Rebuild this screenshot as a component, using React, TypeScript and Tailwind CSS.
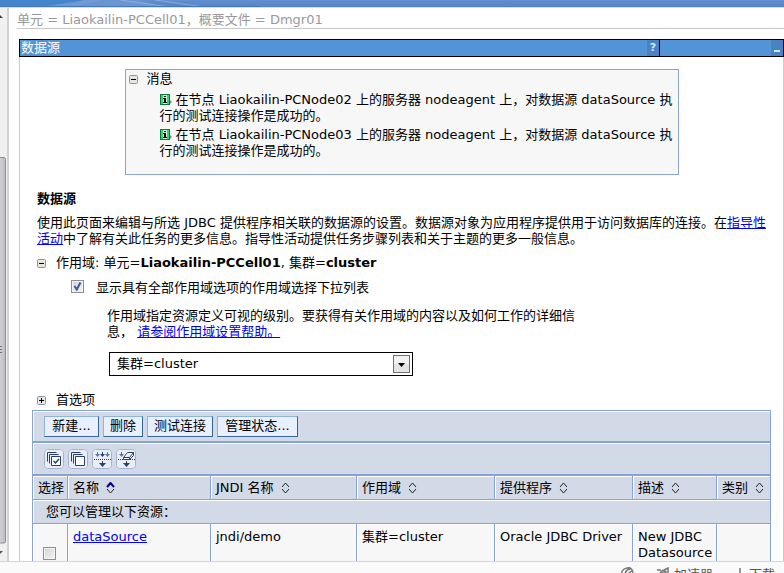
import { useState, type ReactNode } from "react";

const MESSAGES = ["Liaokailin-PCNode02", "Liaokailin-PCNode03"];

const ACTIONS = ["新建...", "删除", "测试连接", "管理状态..."];

const COLUMNS = ["名称", "JNDI 名称", "作用域", "提供程序", "描述", "类别"];

export default function App() {
  return (
    <div className="flex h-screen flex-col overflow-hidden bg-white font-['DejaVu_Sans','Noto_Sans_CJK_SC',sans-serif] text-[13px] leading-4 text-black">
      <TopBanner />
      <div className="flex min-h-0 flex-1">
        <SideScrollbar />
        <main className="min-w-0 flex-1 overflow-hidden">
          <div className="ml-2 border-b border-[#c8c8c8] pt-1 text-[#999]">
            单元 = Liaokailin-PCCell01，概要文件 = Dmgr01
          </div>
          <Portlet />
        </main>
      </div>
      <StatusBar />
    </div>
  );
}

function TopBanner() {
  return (
    <header className="h-2 shrink-0 overflow-hidden border-b border-[#d5dcea] bg-linear-to-b from-[#628fd0] to-[#5583c6]">
      <svg width="260" height="7" viewBox="0 0 260 7">
        <path d="M0 0h85L60 7H0z" fill="#4584ca" />
        <path d="M40 7L85 0h20L75 7z" fill="#7ea3da" opacity=".6" />
        <path d="M75 7l30-7h35l20 7z" fill="#6a94d2" />
        <path d="M120 0l50 7M155 0l50 7" fill="none" stroke="#a3bfe6" opacity=".6" />
        <path d="M0 6.500h260" stroke="#4378bd" />
      </svg>
    </header>
  );
}

function SideScrollbar() {
  return (
    <div className="flex w-[9px] shrink-0 border-r-2 border-[#d2d2d2] bg-[#f0f0f0]">
      <svg width="7" height="553" viewBox="0 0 7 553" className="shrink-0">
        <defs>
          <linearGradient id="thumb">
            <stop offset="0" stopColor="#dcdcde" />
            <stop offset="1" stopColor="#bcbcc0" />
          </linearGradient>
        </defs>
        <path d="M0 10h3l-3-3z" fill="#444" />
        <path d="M-3 149.500h7q1.500 0 1.500 2v382q0 1.500-1.500 1.500h-7z" fill="url(#thumb)" stroke="#8e8e92" />
        <path d="M0 338.500h2M0 341.500h2M0 344.500h2" stroke="#777" />
        <path d="M0 543h3l-3 3z" fill="#555" />
      </svg>
    </div>
  );
}

function Portlet() {
  return (
    <section className="ml-[10px] mt-[10px]">
      <div className="flex border border-black bg-[#5394d6] text-white">
        <h1 className="flex-1 pl-px">数据源</h1>
        <button aria-label="帮助" className="flex w-3 items-center justify-center bg-[#4a83c4] text-[11px] font-bold leading-4 text-[#d5e6f8]">
          ?
        </button>
        <div className="flex w-[124px] justify-end border-l border-black">
          <button aria-label="最小化" className="flex w-3 items-end justify-center bg-[#4a83c4] pb-1">
            <span className="h-[2px] w-[6px] bg-[#d5e6f8]" />
          </button>
        </div>
      </div>
      <div className="border-x border-[#ccc] pt-3">
        <MessageBox />
        <div className="pl-[17px] pr-3">
          <h2 className="mt-4 font-bold">数据源</h2>
          <p className="mt-2 whitespace-nowrap">
            使用此页面来编辑与所选 JDBC 提供程序相关联的数据源的设置。数据源对象为应用程序提供用于访问数据库的连接。在
            <TextLink>
              指导性
              <br />
              活动
            </TextLink>
            中了解有关此任务的更多信息。指导性活动提供任务步骤列表和关于主题的更多一般信息。
          </p>
          <div className="mt-2 flex items-center gap-[10px]">
            <Toggle open label="作用域" />
            <span>
              作用域: 单元=<b>Liaokailin-PCCell01</b>, 集群=<b>cluster</b>
            </span>
          </div>
        </div>
        <ScopeForm />
        <div className="mt-4 flex items-center gap-[10px] pl-[17px]">
          <Toggle label="首选项" />
          <span>首选项</span>
        </div>
        <DataSources />
      </div>
    </section>
  );
}

function MessageBox() {
  return (
    <div className="mx-auto min-h-[106px] max-w-[554px] border border-[#8aa5d6] bg-[#f7f7f7] pt-px">
      <div className="flex items-center gap-[9px] pl-[3px]">
        <Toggle open label="消息" />
        <span>消息</span>
      </div>
      <ul className="flex flex-col gap-[3px] whitespace-nowrap pl-[34px] pt-[5px]">
        {MESSAGES.map((node) => (
          <li key={node}>
            <InfoIcon />
            在节点 {node} 上的服务器 nodeagent 上，对数据源 dataSource 执
            <br />
            行的测试连接操作是成功的。
          </li>
        ))}
      </ul>
    </div>
  );
}

function InfoIcon() {
  return (
    <svg width="12" height="12" viewBox="0 0 12 12" className="mr-1 inline-block align-[-2px]">
      <path d="M10 6l2 2-2 2z" fill="#888" />
      <path d="M0 0h10v11H0z" fill="#087a3c" />
      <path d="M1 1h8v9H1z" fill="#2fd672" />
      <path d="M3 1h4v9H3z" fill="#d8f5e2" />
      <path d="M4 2h2v1H4zM3 4h3v4h1v1H3V8h1V5H3z" fill="#000" />
    </svg>
  );
}

function Toggle({ open, label }: { open?: boolean; label: string }) {
  return (
    <button aria-label={label} aria-expanded={!!open} className="size-[9px] shrink-0">
      <svg width="9" height="9" viewBox="0 0 9 9">
        <rect x=".5" y=".5" width="8" height="8" rx="1" fill="#e9e5df" stroke="#8297b3" />
        <path d={open ? "M2 4.500h5" : "M2 4.500h5M4.500 2v5"} stroke="#000" />
      </svg>
    </button>
  );
}

function TextLink({ children }: { children: ReactNode }) {
  return (
    <a href="#" className="text-[#0000ff] underline">
      {children}
    </a>
  );
}

function Check({ id, checked, onChange }: { id: string; checked: boolean; onChange: (v: boolean) => void }) {
  return (
    <span className="grid size-[13px] shrink-0">
      <input
        id={id}
        type="checkbox"
        aria-label={id}
        checked={checked}
        onChange={(e) => onChange(e.target.checked)}
        className="col-start-1 row-start-1 size-[13px] appearance-none border border-[#8e8f8f] bg-linear-to-br from-[#d0d3d8] to-[#f6f6f6] shadow-[inset_0_0_0_1px_#f4f4f4]"
      />
      {checked && (
        <svg width="13" height="13" viewBox="0 0 13 13" className="pointer-events-none col-start-1 row-start-1">
          <path d="M3.500 6l2.300 3.500L9.500 2.500" fill="none" stroke="#42589c" strokeWidth="2" />
        </svg>
      )}
    </span>
  );
}

function ScopeForm() {
  const [showAll, setShowAll] = useState(true);

  return (
    <div className="pl-[51px]">
      <div className="mt-[9px] flex items-start gap-3">
        <Check id="showAllScopes" checked={showAll} onChange={setShowAll} />
        <label htmlFor="showAllScopes">显示具有全部作用域选项的作用域选择下拉列表</label>
      </div>
      <p className="mt-3 whitespace-nowrap pl-9">
        作用域指定资源定义可视的级别。要获得有关作用域的内容以及如何工作的详细信
        <br />
        息， <TextLink>请参阅作用域设置帮助。</TextLink>
      </p>
      <div className="ml-[38px] mt-3 grid w-[304px] items-center">
        <select
          aria-label="作用域"
          className="col-start-1 row-start-1 h-6 appearance-none border border-black bg-white pl-[7px]"
        >
          <option>集群=cluster</option>
        </select>
        <svg width="17" height="18" viewBox="0 0 17 18" className="pointer-events-none col-start-1 row-start-1 mr-[3px] justify-self-end">
          <rect x=".5" y=".5" width="16" height="17" fill="#e4e4e4" stroke="#707070" />
          <path d="M1 1h15v8H1z" fill="#f2f2f2" />
          <path d="M5 8h7l-3.500 4z" fill="#000" />
        </svg>
      </div>
    </div>
  );
}

function DataSources() {
  const [selected, setSelected] = useState(false);

  return (
    <div className="mx-3 mt-[2px] border border-[#86a2d8] bg-[#d2d9e7]">
      <div className="grid h-8 grid-cols-[55px_40px_66px_81px] items-center gap-1 border-b-2 border-[#86a2d8] pl-[11px] shadow-[inset_1px_1px_0_#fff]">
        {ACTIONS.map((action) => (
          <button
            key={action}
            className="h-[21px] whitespace-nowrap border border-b-[#336699] border-l-[#8fb3d9] border-r-[#336699] border-t-[#8fb3d9] bg-[#e8f0ff]"
          >
            {action}
          </button>
        ))}
      </div>
      <div className="flex h-[33px] items-center gap-1 border-b-2 border-[#86a2d8] pl-[11px] shadow-[inset_1px_1px_0_#fff]">
        <IconButton label="全选">
          <path d="M3.500 12.500v-9h9M5.500 14.500v-9h9" />
          <path d="M7.500 7.500h9v9h-9z" fill="#fff" />
          <path d="M9.500 12l2 2 3.500-4" strokeWidth="1.500" />
        </IconButton>
        <IconButton label="取消全选">
          <path d="M3.500 12.500v-9h9M5.500 14.500v-9h9" />
          <path d="M7.500 7.500h9v9h-9z" fill="#fff" />
        </IconButton>
        <IconButton label="显示过滤器">
          <Filter />
          <path d="M15.500 3v3" stroke="#56779f" />
          <path d="M13 5h5l-2.500 3z" fill="#56779f" stroke="none" />
          <path d="M10.500 3v3" />
          <path d="M8 5h5l-2.500 3z" fill="#2b3f6b" stroke="none" />
        </IconButton>
        <IconButton label="清除过滤器">
          <Filter />
          <path d="M7.500 8.500l4-5h6v3l-4 4h-6zM7.500 8.500h6l4-5M13.500 8.500v2" fill="#fff" />
        </IconButton>
      </div>
      <table className="w-full table-fixed border-separate border-spacing-0 text-left">
        <colgroup>
          <col className="w-[34px]" />
          <col className="w-[143px]" />
          <col className="w-[146px]" />
          <col className="w-[138px]" />
          <col />
          <col className="w-[84px]" />
          <col className="w-[54px]" />
        </colgroup>
        <thead>
          <tr className="h-6 whitespace-nowrap">
            <th className="border-b border-[#86a2d8] pl-[5px] pt-px font-normal shadow-[inset_1px_1px_0_#fff]">选择</th>
            {COLUMNS.map((name, i) => (
              <th
                key={name}
                className="border-b border-l border-[#86a2d8] pl-[5px] pt-px font-normal shadow-[inset_1px_1px_0_#fff]"
              >
                <span className="flex items-center gap-[7px]">
                  {name}
                  <SortIcon active={i === 0} />
                </span>
              </th>
            ))}
          </tr>
        </thead>
        <tbody>
          <tr className="h-6">
            <td colSpan={7} className="border-b border-[#86a2d8] pl-[13px] pt-px shadow-[inset_1px_1px_0_#fff]">
              您可以管理以下资源：
            </td>
          </tr>
          <tr className="h-10 bg-[#f7f7f7] align-top">
            <td className="pl-[10px] pt-[23px] shadow-[inset_1px_1px_0_#fff]">
              <Check id="selectDataSource" checked={selected} onChange={setSelected} />
            </td>
            <Cell>
              <TextLink>dataSource</TextLink>
            </Cell>
            <Cell>jndi/demo</Cell>
            <Cell>集群=cluster</Cell>
            <Cell>Oracle JDBC Driver</Cell>
            <Cell>
              New JDBC
              <br />
              Datasource
            </Cell>
            <Cell />
          </tr>
        </tbody>
      </table>
    </div>
  );
}

function Cell({ children }: { children?: ReactNode }) {
  return (
    <td className="whitespace-nowrap border-l border-[#86a2d8] pl-[5px] pt-[5px] shadow-[inset_1px_1px_0_#fff]">
      {children}
    </td>
  );
}

function SortIcon({ active }: { active: boolean }) {
  return (
    <svg width="9" height="12" viewBox="0 0 9 12" fill="none">
      <path d="M1 5l3.500-4L8 5" stroke={active ? "#000080" : "#222"} strokeWidth={active ? 2 : 1} />
      <path d="M1 7l3.500 4L8 7" stroke="#222" />
    </svg>
  );
}

function IconButton({ label, children }: { label: string; children: ReactNode }) {
  return (
    <button aria-label={label} className="size-5 rounded-[3px] bg-[#e9eef6]">
      <svg width="20" height="20" viewBox="0 0 20 20" fill="none" stroke="#2b3f6b">
        <rect x=".5" y=".5" width="19" height="19" rx="3" stroke="#a3b4d0" />
        {children}
      </svg>
    </button>
  );
}

// Dotted filter row with the arrow leaving it
function Filter() {
  return (
    <>
      <path d="M5.500 3v3" stroke="#56779f" />
      <path d="M3 5h5L5.500 8z" fill="#56779f" stroke="none" />
      <path d="M2 10.500h17" strokeDasharray="1 1" />
      <path d="M10.500 12v3" />
      <path d="M7 14h7l-3.500 4z" fill="#2b3f6b" stroke="none" />
    </>
  );
}

function StatusBar() {
  return (
    <footer className="flex h-3 shrink-0 items-start justify-end overflow-hidden border-t border-[#d5d5d5] bg-[#fafafa] pr-[9px] pt-[5px] text-[#555]">
      <svg width="14" height="14" viewBox="0 0 14 14" fill="none" stroke="#777" strokeWidth="1.500" className="mr-[22px]">
        <path d="M2 11Q0 2 7 1q6-1 6 6M5 11Q4 3 10 2M8 11q-1-5 4-7" />
      </svg>
      <svg width="14" height="14" viewBox="0 0 14 14" fill="none" stroke="#777" strokeWidth="1.500" className="mr-1">
        <path d="M1 3h4M6 4l6-3v5L7 10zM2 8l4-4" />
        <circle cx="9" cy="5" r="1" />
      </svg>
      <span className="mr-[22px]">加速器</span>
      <svg width="10" height="14" viewBox="0 0 10 14" fill="none" stroke="#777" strokeWidth="1.500" className="mr-1">
        <path d="M5 1v10M1 7l4 4 4-4" />
      </svg>
      <span>下载</span>
    </footer>
  );
}
